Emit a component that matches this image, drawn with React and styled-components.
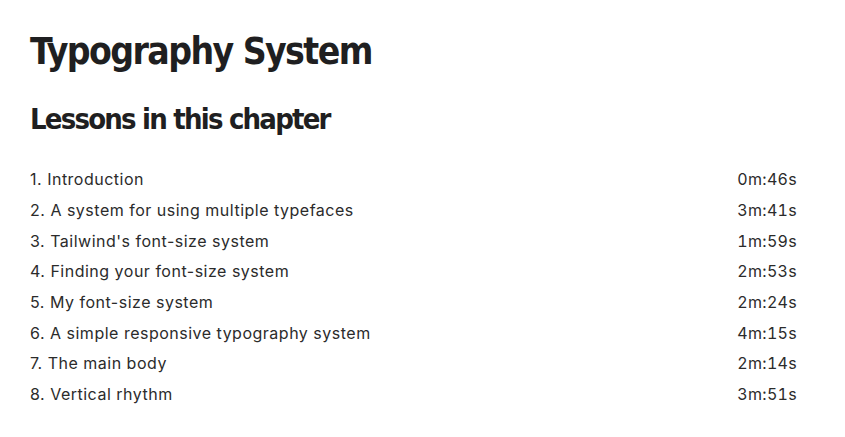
import styled, { createGlobalStyle } from "styled-components";

const GlobalStyle = createGlobalStyle`
  body {
    margin: 0;
    background: #ffffff;
  }
`;

const Page = styled.main`
  width: 767px;
  padding: 26px 0 0 30px;
  color: #222222;
`;

const Title = styled.h1`
  margin: 0;
  font-family: "DejaVu Sans Condensed", "DejaVu Sans", sans-serif;
  font-weight: 700;
  font-size: 37px;
  line-height: 52px;
  letter-spacing: -1.6px;
  color: #1f1f21;
`;

const SubTitle = styled.h2`
  margin: 22px 0 0;
  font-family: "DejaVu Sans Condensed", "DejaVu Sans", sans-serif;
  font-weight: 700;
  font-size: 29px;
  line-height: 38px;
  letter-spacing: -1.8px;
  color: #1f1f21;
`;

const LessonList = styled.ol`
  list-style: none;
  margin: 26px 0 0;
  padding: 0;
`;

const Lesson = styled.li`
  display: flex;
  justify-content: space-between;
  align-items: center;
  height: 30.7px;
  font-family: Inter, "Liberation Sans", sans-serif;
  font-size: 16px;
  letter-spacing: 0.5px;
  color: #2b2b2b;
`;

const Duration = styled.span`
  font-variant-numeric: tabular-nums;
  letter-spacing: 0.3px;
`;

const lessons = [
  { title: "Introduction", time: "0m:46s" },
  { title: "A system for using multiple typefaces", time: "3m:41s" },
  { title: "Tailwind's font-size system", time: "1m:59s" },
  { title: "Finding your font-size system", time: "2m:53s" },
  { title: "My font-size system", time: "2m:24s" },
  { title: "A simple responsive typography system", time: "4m:15s" },
  { title: "The main body", time: "2m:14s" },
  { title: "Vertical rhythm", time: "3m:51s" },
];

const App = () => {
  return (
    <>
      <GlobalStyle />
      <Page>
        <Title>Typography System</Title>
        <SubTitle>Lessons in this chapter</SubTitle>
        <LessonList>
          {lessons.map((lesson, i) => (
            <Lesson key={i}>
              <span>
                {i + 1}. {lesson.title}
              </span>
              <Duration>{lesson.time}</Duration>
            </Lesson>
          ))}
        </LessonList>
      </Page>
    </>
  );
};

export default App;
